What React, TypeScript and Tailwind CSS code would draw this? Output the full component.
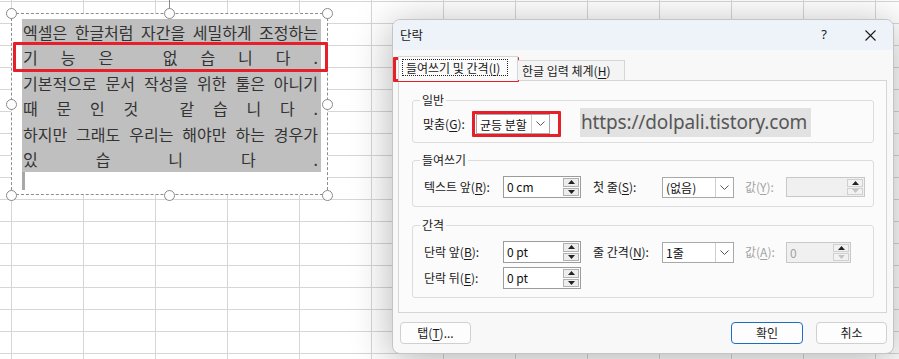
import React from "react";

const KR = "font-['Noto_Sans_CJK_KR','Noto_Sans',sans-serif]";

const U = ({ children }: { children: React.ReactNode }) => (
  <span className="underline underline-offset-[2px] decoration-[1px]">{children}</span>
);

function SpinBtns({ disabled }: { disabled?: boolean }) {
  return (
    <div className="flex flex-col gap-[1px] w-[17px] h-full py-[1px] pr-[1px]">
      <div
        className={`flex-1 flex items-center justify-center border ${
          disabled ? "border-[#d0d0d0] bg-[#f2f2f2]" : "border-[#b0b0b0] bg-[#ededed]"
        }`}
      >
        <svg width="7" height="4" viewBox="0 0 7 4">
          <path d="M0 4L3.5 0L7 4Z" fill="#222" />
        </svg>
      </div>
      <div
        className={`flex-1 flex items-center justify-center border ${
          disabled ? "border-[#d0d0d0] bg-[#f2f2f2]" : "border-[#b0b0b0] bg-[#ededed]"
        }`}
      >
        <svg width="7" height="4" viewBox="0 0 7 4">
          <path d="M0 0L3.5 4L7 0Z" fill={disabled ? "#c4c4c4" : "#222"} />
        </svg>
      </div>
    </div>
  );
}

function SpinInput({
  value,
  className,
  disabled,
}: {
  value: string;
  className: string;
  disabled?: boolean;
}) {
  return (
    <div
      className={`flex items-stretch h-[22px] border ${
        disabled ? "border-[#c8c8c8] bg-[#f0f0f0] text-[#a0a0a0]" : "border-[#9c9c9c] bg-white text-[#111]"
      } ${className}`}
    >
      <span className="flex-1 pl-[3px] leading-[20px]">{value}</span>
      <SpinBtns disabled={disabled} />
    </div>
  );
}

function Select({ value, className }: { value: string; className: string }) {
  return (
    <div className={`flex items-stretch h-[21px] border border-[#a8a8a8] bg-white ${className}`}>
      <span className="flex-1 pl-[3px] leading-[19px] text-[#111]">{value}</span>
      <div className="w-[18px] border-l border-[#cfcfcf] flex items-center justify-center">
        <svg width="9" height="5" viewBox="0 0 9 5">
          <path d="M0.5 0.5L4.5 4.5L8.5 0.5" stroke="#555" fill="none" />
        </svg>
      </div>
    </div>
  );
}

function Group({
  label,
  className,
  children,
}: {
  label: string;
  className: string;
  children: React.ReactNode;
}) {
  return (
    <div className={`relative border border-[#dcdcdc] rounded-[3px] ${className}`}>
      <span className="absolute -top-[9px] left-[7px] px-[2px] bg-[#fbfbfb] leading-[16px] text-[#1a1a1a]">
        {label}
      </span>
      {children}
    </div>
  );
}

const tbLines: string[][] = [
  ["엑셀은", "한글처럼", "자간을", "세밀하게", "조정하는"],
  ["기", "능", "은", " ", "없", "습", "니", "다", "."],
  ["기본적으로", "문서", "작성을", "위한", "툴은", "아니기"],
  ["때", "문", "인", "것", " ", "같", "습", "니", "다", "."],
  ["하지만", "그래도", "우리는", "해야만", "하는", "경우가"],
  ["있", "습", "니", "다", "."],
];

function Handle({ x, y }: { x: number; y: number }) {
  return (
    <div
      className="absolute w-[11px] h-[11px] rounded-full border-[1.5px] border-[#8a8a8a] bg-white"
      style={{ left: x - 5.5, top: y - 5.5 }}
    />
  );
}

function TextBox() {
  return (
    <>
      <div className="absolute left-[169px] top-0 w-px h-[9px] bg-[#8a8a8a]" />
      <div className="absolute left-[11px] top-[13px] w-[317px] h-[182px] bg-white border border-dashed border-[#8d8d8d]">
        <div className={`flex flex-col ml-[10px] mt-[5px] w-[299px] ${KR} text-[16px] text-[#333]`}>
          <div className="bg-[#bfbfbf] pl-[1px] pr-[3px]">
            {tbLines.map((items, i) => (
              <div key={i} className="flex justify-between items-center h-[25.5px]">
                {items.map((t, j) => (
                  <span key={j} className="whitespace-pre">
                    {t}
                  </span>
                ))}
              </div>
            ))}
          </div>
          <div className="w-[3px] h-[18px] bg-[#a8a8a8]" />
        </div>
      </div>
      <Handle x={11} y={13.5} />
      <Handle x={169} y={13.5} />
      <Handle x={327.5} y={13.5} />
      <Handle x={11} y={104} />
      <Handle x={327.5} y={104} />
      <Handle x={11} y={195} />
      <Handle x={169} y={195} />
      <Handle x={327.5} y={195} />
      {/* red annotation */}
      <div className="absolute left-[13px] top-[42px] w-[315px] h-[30px] border-[3px] border-[#e5202a] rounded-[1px]" />
    </>
  );
}

function Dialog() {
  return (
    <div
      className={`absolute left-[392px] top-[19px] w-[502px] h-[335px] rounded-[8px] border border-[#c4c4c4] bg-[#f8f8f8] overflow-hidden shadow-[0_6px_40px_rgba(0,0,0,0.3)] ${KR} text-[12px] text-[#1a1a1a]`}
    >
      {/* title bar */}
      <div className="flex items-center h-[30px] bg-[#eef2f9]">
        <span className="pl-[7px] text-[12.5px] text-[#1a1a1a]">단락</span>
        <div className="ml-auto flex h-full">
          <div className="w-[46px] flex items-center justify-center text-[13px] text-[#1a1a1a] font-['Noto_Sans',sans-serif]">
            ?
          </div>
          <div className="w-[46px] flex items-center justify-center">
            <svg width="11" height="11" viewBox="0 0 11 11">
              <path d="M0.5 0.5L10.5 10.5M10.5 0.5L0.5 10.5" stroke="#1a1a1a" strokeWidth="1.1" />
            </svg>
          </div>
        </div>
      </div>

      {/* tabs + panel */}
      <div className="flex flex-col px-[5px] pt-[7px]">
        <div className="flex items-end h-[24px] relative z-10">
          <div className="h-[25px] w-[120px] border border-b-0 border-[#d5d5d5] bg-[#fbfbfb] flex items-start pt-[2px] pl-[3px]">
            <div className="w-[106px] h-[17px] border border-dotted border-[#222] flex items-center pl-[3px] leading-[15px]">
              들여쓰기 및 간격(<U>I</U>)
            </div>
          </div>
          <div className="h-[20px] w-[107px] border border-l-0 border-b-0 border-[#d5d5d5] bg-[#f4f4f4] flex items-center pl-[4px] mb-[1px]">
            한글 입력 체계(<U>H</U>)
          </div>
        </div>
        <div className="h-[233px] w-[489px] -mt-px border border-[#d5d5d5] bg-[#fbfbfb] flex flex-col pt-[19px] pl-[13px]">
          <Group label="일반" className="w-[462px] h-[43px]">
            <div className="flex items-center h-full pt-[4px] pl-[10px]">
              <span className="w-[53px]">
                맞춤(<U>G</U>):
              </span>
              <Select value="균등 분할" className="w-[74px] !h-[20px]" />
              <div className="ml-[30px] w-[231px] h-[29px] bg-[#e2e2e2] flex items-center pl-[1px] font-['Noto_Sans',sans-serif] text-[19px] tracking-[-0.15px] text-[#575757] -mt-[3px] whitespace-nowrap">
                https://dolpali.tistory.com
              </div>
            </div>
          </Group>

          <Group label="들여쓰기" className="w-[462px] h-[47px] mt-[17px]">
            <div className="flex items-center h-[22px] mt-[15px] pl-[11px]">
              <span className="w-[79px]">
                텍스트 앞(<U>R</U>):
              </span>
              <SpinInput value="0 cm" className="w-[78px]" />
              <span className="w-[69px] ml-[12px]">
                첫 줄(<U>S</U>):
              </span>
              <Select value="(없음)" className="w-[72px]" />
              <span className="w-[41px] ml-[11px] text-[#a3a3a3]">
                값(<U>Y</U>):
              </span>
              <SpinInput value="" className="w-[79px] !h-[20px]" disabled />
            </div>
          </Group>

          <Group label="간격" className="w-[462px] h-[73px] mt-[18px]">
            <div className="flex flex-col gap-[4px] mt-[15px] pl-[11px]">
              <div className="flex items-center h-[22px]">
                <span className="w-[79px]">
                  단락 앞(<U>B</U>):
                </span>
                <SpinInput value="0 pt" className="w-[78px]" />
                <span className="w-[69px] ml-[12px]">
                  줄 간격(<U>N</U>):
                </span>
                <Select value="1줄" className="w-[72px]" />
                <span className="w-[41px] ml-[11px] text-[#a3a3a3]">
                  값(<U>A</U>):
                </span>
                <SpinInput value="0" className="w-[65px] !h-[21px]" disabled />
              </div>
              <div className="flex items-center h-[22px]">
                <span className="w-[79px]">
                  단락 뒤(<U>E</U>):
                </span>
                <SpinInput value="0 pt" className="w-[78px]" />
              </div>
            </div>
          </Group>
        </div>
      </div>

      {/* buttons */}
      <div className="flex items-center mt-[9px] pl-[7px] pr-[6px]">
        <div className="w-[71px] h-[22px] rounded-[4px] border border-[#d0d0d0] bg-[#fdfdfd] flex items-center justify-center">
          탭(<U>T</U>)...
        </div>
        <div className="ml-auto w-[72px] h-[22px] rounded-[4px] border-[1.5px] border-[#1a6fc4] bg-[#fdfdfd] flex items-center justify-center">
          확인
        </div>
        <div className="ml-[13px] w-[71px] h-[22px] rounded-[4px] border border-[#d0d0d0] bg-[#fdfdfd] flex items-center justify-center">
          취소
        </div>
      </div>

      {/* red annotations */}
      <div className="absolute left-[0px] top-[37px] w-[126px] h-[25px] border-[3px] border-[#e5202a] rounded-[1px]" />
      <div className="absolute left-[79px] top-[91px] w-[89px] h-[26px] border-[3px] border-[#e5202a] rounded-[1px]" />
    </div>
  );
}

export default function App() {
  return (
    <div className="relative w-[899px] h-[359px] overflow-hidden bg-white bg-[linear-gradient(to_right,#d6d6d6_1px,transparent_1px),linear-gradient(to_bottom,#d6d6d6_1px,transparent_1px)] bg-size-[72px_22px] bg-position-[11px_1px]">
      <TextBox />
      <Dialog />
    </div>
  );
}
